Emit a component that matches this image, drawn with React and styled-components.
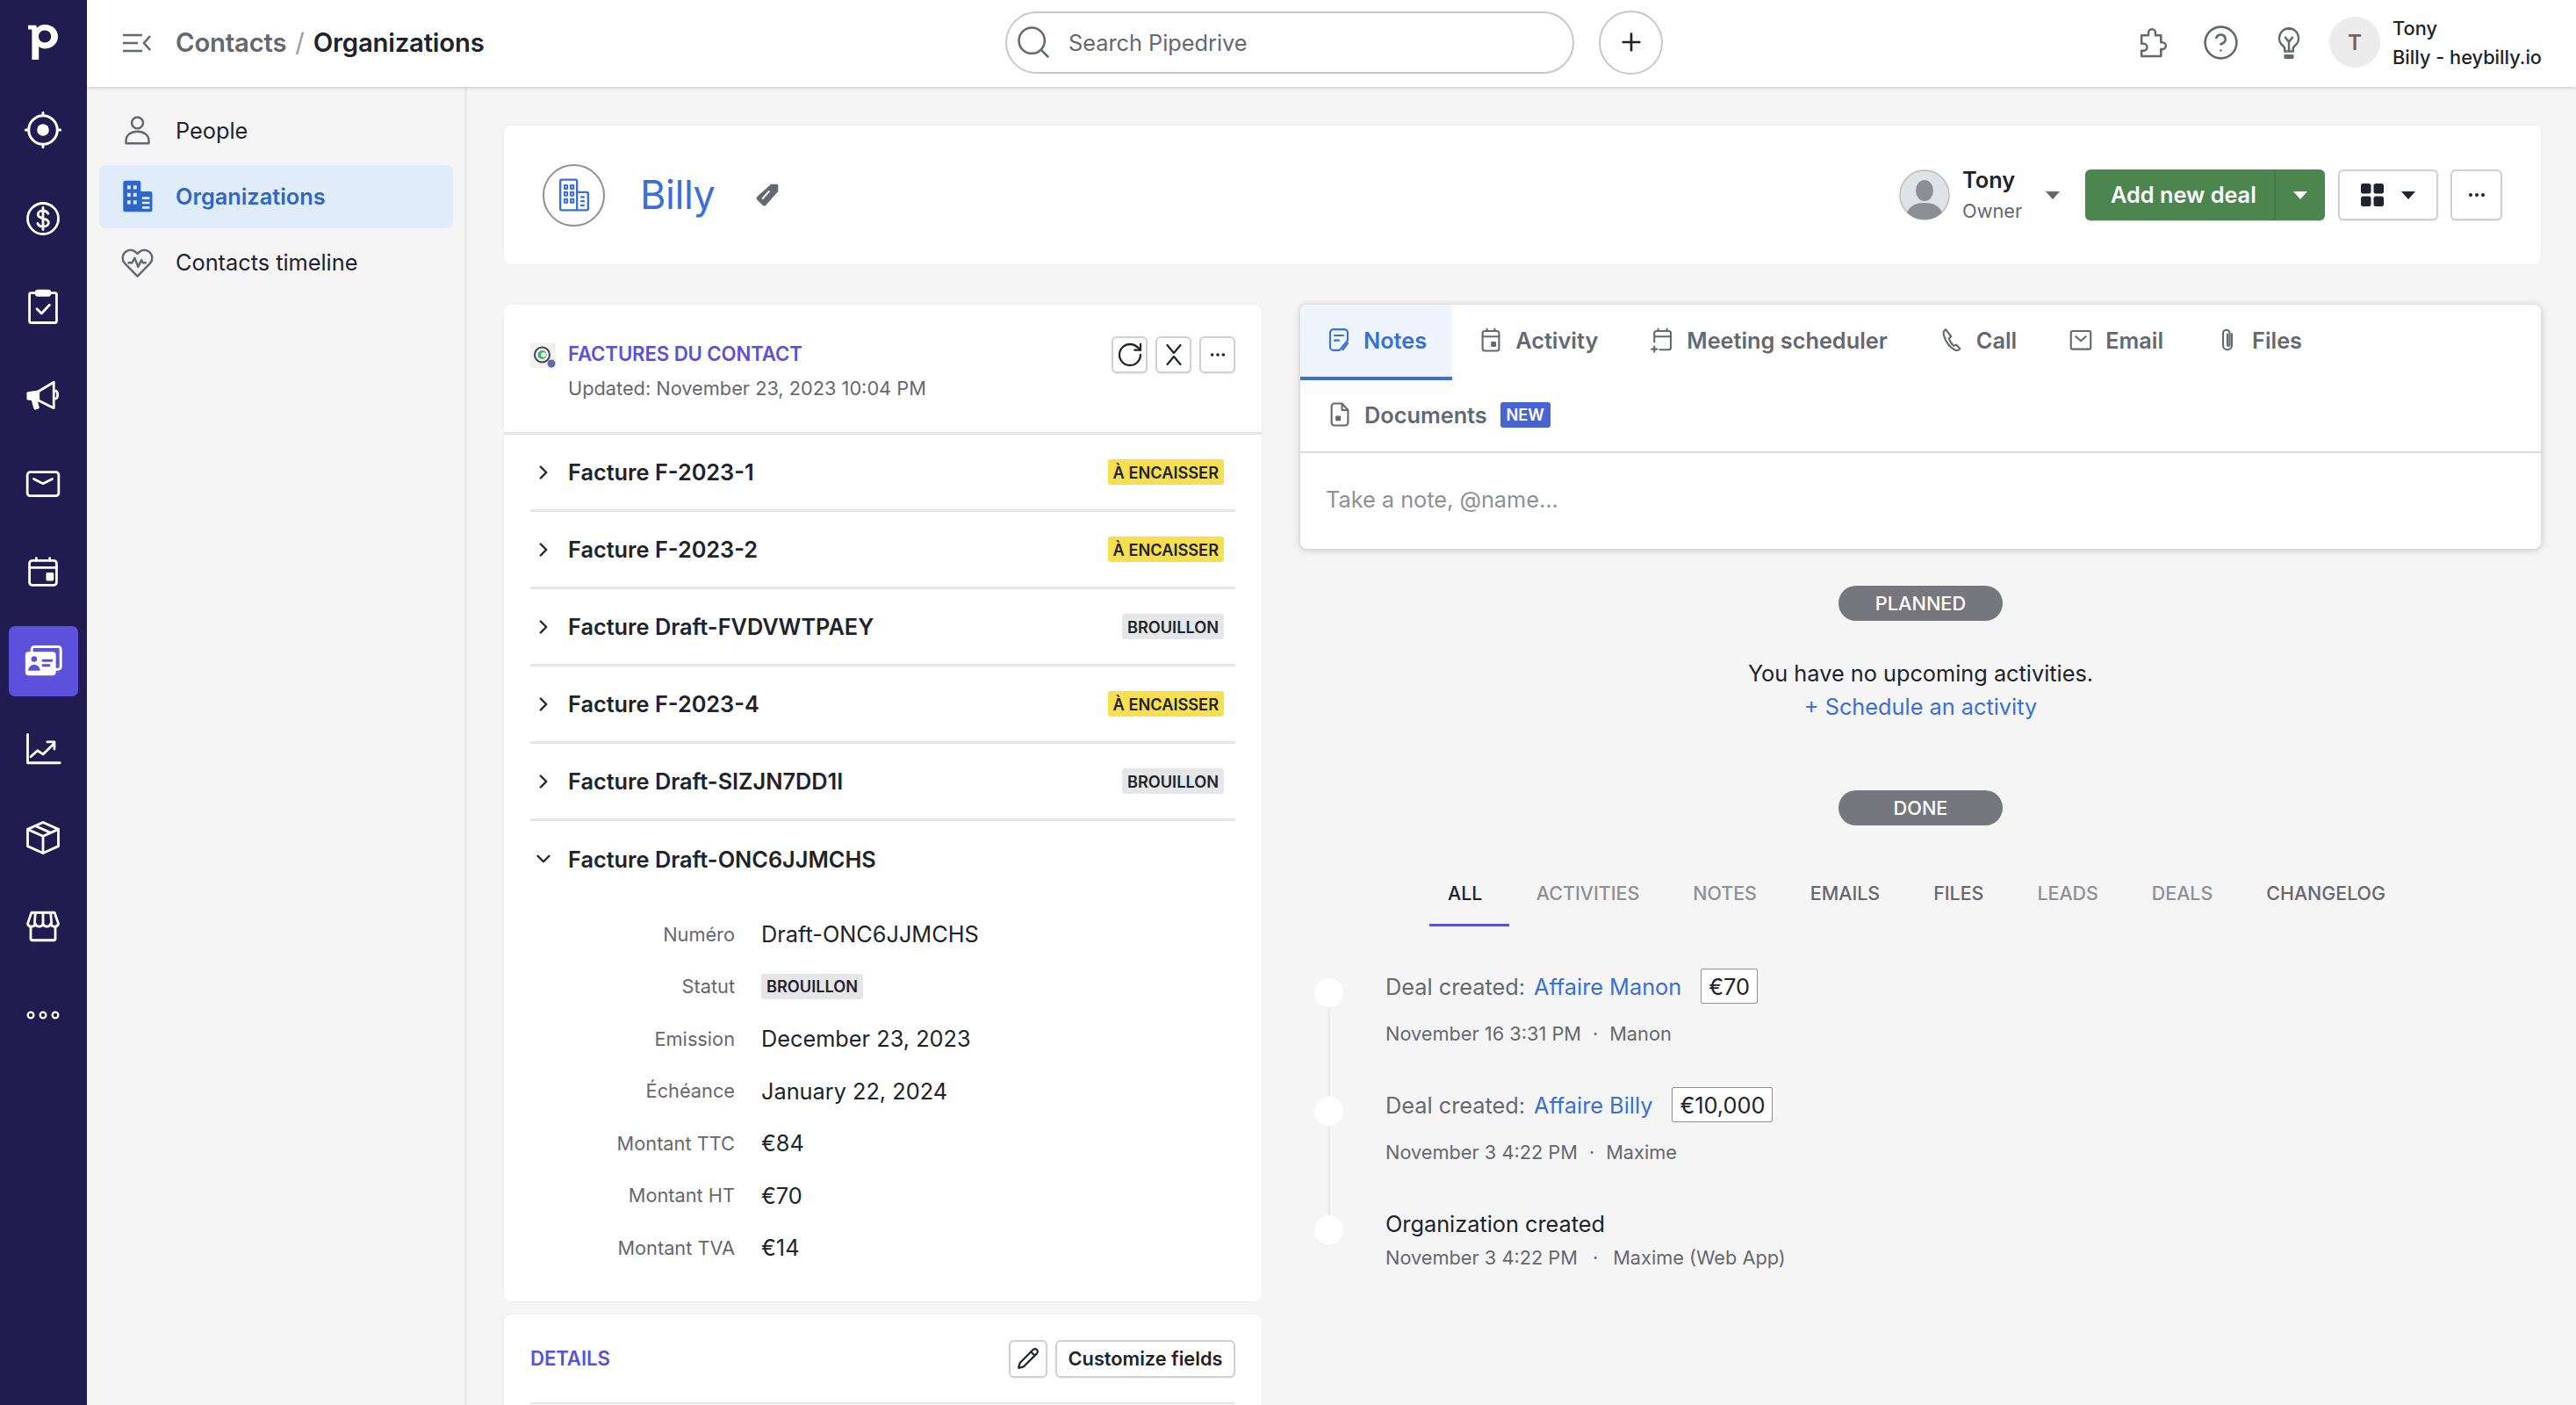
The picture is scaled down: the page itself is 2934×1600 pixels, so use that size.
import React from "react";
import styled, { createGlobalStyle } from "styled-components";
import { Search, Plus, CircleHelp, ChevronRight, ChevronDown, RotateCw, Pencil } from "lucide-react";

const Global = createGlobalStyle`
  html, body { margin: 0; padding: 0; background: #f5f5f5; }
  body { width: 2934px; height: 1600px; overflow: hidden; font-family: Inter, "Liberation Sans", sans-serif; color: #21232c; }
  * { box-sizing: border-box; }
`;

const Page = styled.div`display: flex; width: 2934px; height: 1600px; overflow: hidden;`;
const Nav = styled.nav`width: 99px; flex: none; background: #201c50; display: flex; flex-direction: column; align-items: center;`;
const LogoSlot = styled.div`height: 99px; width: 100%; display: flex; justify-content: center; align-items: center; padding: 0 1px 3px 0; margin-bottom: 9px;`;
const NavList = styled.div`display: flex; flex-direction: column; gap: 20.75px; align-items: center; padding-right: 1px;`;
const NavItem = styled.div`
  width: 79px; height: 80px; border-radius: 7px; display: flex; align-items: center; justify-content: center;
  background: ${p => (p.$active ? "#5d50da" : "transparent")};
`;
const NavSvg = styled.svg.attrs({ viewBox: "0 0 24 24", fill: "none", stroke: "#fff", strokeWidth: 1.6, strokeLinecap: "round", strokeLinejoin: "round" })`
  width: ${p => p.$size || 42}px; height: ${p => p.$size || 42}px;
`;
const Column = styled.div`flex: 1; display: flex; flex-direction: column; min-width: 0;`;
const TopBar = styled.header`
  height: 99px; flex: none; background: #fff; display: flex; align-items: center; padding-right: 39px;
  box-shadow: 0 1px 4px rgba(0,0,0,.18); position: relative; z-index: 2;
`;
const Crumbs = styled.div`width: 1046px; flex: none; display: flex; align-items: center; padding-left: 41px; gap: 28px; margin-top: -2px;`;
const CrumbText = styled.div`display: flex; align-items: center; gap: 10px; font-size: 29.3px; font-weight: 600; letter-spacing: -.2px;`;
const CrumbMuted = styled.span`color: #65686f;`;
const CrumbSlash = styled.span`color: #9a9ca1; font-weight: 400;`;
const SearchBox = styled.div`
  width: 648px; height: 71px; border: 2px solid #c6c8cb; border-radius: 36px; display: flex; align-items: center; gap: 18px;
  padding-left: 8px; margin-top: -3px; color: #65686f; font-size: 25.3px;
`;
const RoundBtn = styled.div`
  width: 73px; height: 73px; border-radius: 50%; border: 2px solid #c6c8cb; margin-left: 28px; margin-top: -3px;
  display: flex; align-items: center; justify-content: center; color: #21232c;
`;
const TopRight = styled.div`margin-left: auto; display: flex; align-items: center;`;
const TopIcon = styled.div`width: 78px; display: flex; justify-content: center; color: #65686f; margin-top: -2px;`;
const TopSvg = styled.svg.attrs({ viewBox: "0 0 24 24", fill: "none", stroke: "currentColor", strokeWidth: 1.6, strokeLinecap: "round", strokeLinejoin: "round" })`
  width: 38px; height: 38px;
`;
const UserAvatar = styled.div`
  width: 58px; height: 58px; border-radius: 50%; background: #ececed; margin-left: 7px; margin-right: 14px; margin-top: -3px;
  display: flex; align-items: center; justify-content: center; color: #65686f; font-size: 24.3px; font-weight: 600;
`;
const UserText = styled.div`display: flex; flex-direction: column; gap: 5px; font-size: 21.75px; font-weight: 500; line-height: 28px; margin-top: -3px;`;
const Body = styled.div`flex: 1; display: flex; min-height: 0;`;
const Side = styled.aside`width: 433px; flex: none; border-right: 3px solid #e9e9e9; padding: 14px 13px 0 14px; display: flex; flex-direction: column; gap: 3px;`;
const SideItem = styled.div`
  height: 72px; border-radius: 7px; display: flex; align-items: center; gap: 25px; padding: 0 0 2px 25px; font-size: 25.3px;
  font-weight: ${p => (p.$active ? 600 : 400)}; color: ${p => (p.$active ? "#2f66c9" : "#21232c")}; background: ${p => (p.$active ? "#e1ecfb" : "transparent")};
`;
const SideSvg = styled.svg.attrs({ viewBox: "0 0 24 24", fill: "none", stroke: "#65686f", strokeWidth: 1.6, strokeLinecap: "round", strokeLinejoin: "round" })`
  width: 37px; height: 37px; flex: none;
`;
const Main = styled.main`flex: 1; min-width: 0; padding: 44px 40px 0 42px; display: flex; flex-direction: column; gap: 46px;`;
const Card = styled.section`background: #fff; border-radius: 8px; box-shadow: 0 0 2px rgba(0,0,0,.08);`;
const HeaderCard = styled(Card)`height: 158px; flex: none; display: flex; align-items: center; padding: 0 44px;`;
const OrgCircle = styled.div`width: 71px; height: 71px; border-radius: 50%; border: 2px solid #8f9196; display: flex; align-items: center; justify-content: center;`;
const OrgName = styled.h1`margin: 0 46px 0 40px; font-size: 44.9px; font-weight: 400; color: #3a6fd8; letter-spacing: -.4px;`;
const HeadRight = styled.div`margin-left: auto; display: flex; align-items: center;`;
const OwnerPic = styled.svg.attrs({ viewBox: "0 0 58 58" })`width: 58px; height: 58px;`;
const OwnerText = styled.div`display: flex; flex-direction: column; margin-left: 14px; width: 95px;`;
const OwnerName = styled.span`font-size: 25.3px; font-weight: 600; line-height: 32px;`;
const OwnerRole = styled.span`font-size: 21.75px; color: #65686f; line-height: 32px; margin-top: 3px;`;
const Caret = styled.span`
  width: 0; height: 0; border-left: 8px solid transparent; border-right: 8px solid transparent; border-top: 9px solid ${p => p.$color || "#21232c"};
  flex: none; display: block;
`;
const OwnerCaretSlot = styled.div`width: 45px;`;
const GreenButton = styled.div`
  height: 58px; width: 273px; border-radius: 6px; background: #4a864e; display: flex; align-items: center; color: #fff; font-size: 25.3px; font-weight: 600;
  box-shadow: 0 1px 2px rgba(0,0,0,.2);
`;
const GreenLabel = styled.div`flex: 1; padding: 0 0 2px 29px;`;
const GreenCaret = styled.div`width: 58px; height: 100%; border-left: 2px solid #437a47; display: flex; align-items: center; justify-content: center;`;
const OutlineBtn = styled.div`
  height: 58px; width: ${p => p.$w}px; margin-left: ${p => p.$ml || 0}px; border-radius: 6px; background: #fff; border: 2px solid #cfd0d3;
  box-shadow: 0 1px 2px rgba(0,0,0,.1); display: flex; align-items: center; justify-content: center; gap: ${p => p.$gap || 0}px;
`;
const Columns = styled.div`display: flex; gap: 44px; flex: 1; min-height: 0;`;
const LeftCol = styled.div`width: 863px; flex: none; display: flex; flex-direction: column; gap: 15px;`;
const RightCol = styled.div`flex: 1; min-width: 0; display: flex; flex-direction: column;`;
const InvoiceCard = styled(Card)`height: 1135px; flex: none;`;
const InvoiceHead = styled.div`height: 148px; border-bottom: 3px solid #e6e6e7; padding: 36px 30px 0; display: flex; align-items: flex-start; gap: 14px;`;
const AppIcon = styled.svg.attrs({ viewBox: "0 0 29 29" })`width: 29px; height: 29px; margin-top: 7px; flex: none;`;
const HeadText = styled.div`flex: 1; display: flex; flex-direction: column; gap: 7px; margin-top: 4px;`;
const SectionTitle = styled.div`font-size: 22.2px; font-weight: 600; color: #5c50d8; line-height: 32px; letter-spacing: -.1px;`;
const Updated = styled.div`font-size: 21.75px; color: #65686f; line-height: 32px;`;
const SmallBtns = styled.div`display: flex; gap: 9px;`;
const SmallBtn = styled.div`
  width: 41px; height: 42px; border-radius: 6px; border: 2px solid #cfd0d3; box-shadow: 0 1px 2px rgba(0,0,0,.1); background: #fff;
  display: flex; align-items: center; justify-content: center; color: #21232c;
`;
const Row = styled.div`
  height: 88px; margin: 0 30px; display: flex; align-items: center; gap: 0;
  border-bottom: ${p => (p.$last ? "none" : "3px solid #e6e6e7")}; padding: 0 13px ${p => (p.$last ? 2 : 0)}px 0;
`;
const ChevronSlot = styled.div`width: 43px; flex: none; display: flex; align-items: center; padding-left: 2px; color: #21232c;`;
const RowTitle = styled.div`flex: 1; font-size: 25.3px; font-weight: 600;`;
const Badge = styled.span`
  height: 29px; padding: 0 6px; border-radius: 3px; display: inline-flex; align-items: center; font-size: 18.2px; font-weight: 600; color: #21232c;
  background: ${p => (p.$kind === "draft" ? "#e5e6e7" : "#f7df4f")};
`;
const Detail = styled.div`display: grid; grid-template-columns: 233px 1fr; grid-auto-rows: 59.5px; column-gap: 30px; margin: 11px 30px 0; align-items: center;`;
const DetailLabel = styled.div`text-align: right; font-size: 21.75px; color: #65686f;`;
const DetailValue = styled.div`font-size: 25.3px; color: #21232c; display: flex; align-items: center;`;
const DetailsCard = styled(Card)`padding: 0 30px; min-height: 300px;`;
const DetailsHead = styled.div`height: 102px; border-bottom: 2px solid #e6e6e7; display: flex; align-items: center; justify-content: space-between;`;
const DetailsActions = styled.div`display: flex; gap: 9px;`;
const IconBtn = styled.div`
  width: 44px; height: 43px; border: 2px solid #cfd0d3; border-radius: 6px; display: flex; align-items: center; justify-content: center;
  box-shadow: 0 1px 2px rgba(0,0,0,.08); color: #21232c;
`;
const TextBtn = styled(IconBtn)`width: 205px; font-size: 21.75px; font-weight: 600;`;
const Composer = styled.section`height: 278px; flex: none; background: #fff; border-radius: 8px; box-shadow: 0 1px 8px rgba(0,0,0,.22); overflow: hidden;`;
const TabRow = styled.div`height: 86px; display: flex;`;
const Tab = styled.div`
  display: flex; align-items: center; gap: 13px; padding: 0 29px 2px; height: 86px; font-size: 25.3px; font-weight: 600;
  color: ${p => (p.$active ? "#3a6fd8" : "#65686f")}; background: ${p => (p.$active ? "#eef5fe" : "transparent")};
  border-bottom: 4px solid ${p => (p.$active ? "#3d6fd6" : "transparent")};
`;
const TabSvg = styled.svg.attrs({ viewBox: "0 0 24 24", fill: "none", stroke: "currentColor", strokeWidth: 1.7, strokeLinecap: "round", strokeLinejoin: "round" })`
  width: 30px; height: 30px; flex: none;
`;
const DocRow = styled.div`height: 83px; border-bottom: 2px solid #dcdcde; display: flex; align-items: center; padding: 0 0 3px 30px; gap: 13px; font-size: 25.3px; font-weight: 600; color: #65686f;`;
const NewBadge = styled.span`height: 29px; width: 57px; border-radius: 3px; background: #4a63d2; color: #fff; font-size: 18.2px; font-weight: 600; display: flex; align-items: center; justify-content: center; margin-left: 2px;`;
const NotePlaceholder = styled.div`height: 109px; padding-left: 29px; display: flex; align-items: center; font-size: 25.3px; color: #8e9096; padding-bottom: 5px;`;
const Pill = styled.div`
  align-self: center; width: 187px; height: 40px; border-radius: 20px; background: #75777d; color: #fff; font-size: 21.75px; font-weight: 500;
  display: flex; align-items: center; justify-content: center; margin-top: ${p => p.$mt}px;
`;
const Empty = styled.div`margin-top: 41px; text-align: center; font-size: 25.3px; line-height: 38px;`;
const Link = styled.a`color: #3a6fd8;`;
const HistoryTabs = styled.div`display: flex; margin: 41px 0 0 147px; height: 74px;`;
const HistoryTab = styled.div`
  height: 74px; display: flex; align-items: center; padding: ${p => (p.$first ? "0 31px 0 21px" : "0 30.5px")}; font-size: 21.4px; font-weight: 500;
  color: ${p => p.$color}; border-bottom: 3px solid ${p => (p.$first ? "#5d50da" : "transparent")};
`;
const Timeline = styled.div`margin: 48px 0 0 16px; display: flex; flex-direction: column;`;
const TimeItem = styled.div`
  position: relative; display: flex; gap: 48px; height: 135px;
  &:not(:last-child)::before { content: ""; position: absolute; left: 15px; top: 26px; height: 135px; width: 3px; background: #ededee; }
`;
const Dot = styled.div`width: 33px; height: 33px; border-radius: 50%; background: #fff; flex: none; margin-top: 11px; position: relative; z-index: 1;`;
const TimeBody = styled.div`display: flex; flex-direction: column;`;
const TimeTitle = styled.div`display: flex; align-items: center; gap: 10px; height: 40px; font-size: 25.3px; color: ${p => (p.$dark ? "#21232c" : "#65686f")};`;
const Amount = styled.span`height: 40px; padding: 0 8px; border: 1.5px solid #8d8f94; background: #fff; color: #21232c; display: flex; align-items: center; margin-left: 12px; border-radius: 2px;`;
const TimeMeta = styled.div`display: flex; gap: ${p => p.$gap || 13}px; font-size: 21.75px; color: #65686f; margin-top: ${p => p.$mt}px; line-height: 38px;`;

const NavIcons = [
  <NavSvg key="t" style={{ strokeWidth: 1.7 }}><circle cx="12" cy="12" r="9.3" /><circle cx="12" cy="12" r="3.9" fill="#fff" stroke="none" /><path d="M12 .8v1.6M12 21.6v1.6M.8 12h1.6M21.6 12h1.6" /></NavSvg>,
  <NavSvg key="d"><circle cx="12" cy="12" r="10" /><path d="M15.3 8.7c-.6-1.2-1.8-1.9-3.3-1.9-1.9 0-3.3 1-3.3 2.5 0 3.6 6.9 1.7 6.9 5.3 0 1.6-1.5 2.6-3.6 2.6-1.6 0-2.9-.7-3.5-2.1M12 4.8v14.4" /></NavSvg>,
  <NavSvg key="c"><rect x="3.2" y="2.6" width="17.6" height="19.4" rx="1" /><rect x="7.6" y="1.2" width="8.8" height="3" rx="1" fill="#fff" /><path d="M8 13l3 3 5.2-5.6" /></NavSvg>,
  <NavSvg key="m"><path d="M2.2 10.6L9 9.6v5.8l-6.8-1z" fill="#fff" /><path d="M9 9.6L19 3.6v16.8L9 15.4" /><path d="M5.2 15l1.6 5.6 2-.5-1.3-4.9" fill="#fff" /><path d="M20.3 9.2c1.6.5 1.6 4.6 0 5.1" /></NavSvg>,
  <NavSvg key="e"><rect x="1.8" y="4.4" width="20.4" height="15.4" rx="1.8" /><path d="M6 8.8l6 3 6-3" /></NavSvg>,
  <NavSvg key="cal"><rect x="3.2" y="4.2" width="17.6" height="16" rx="1.8" /><path d="M3.2 8.8h17.6M7.6 2.6v1.6M16.4 2.6v1.6" /><rect x="14" y="12" width="5" height="5.4" rx=".8" fill="#fff" stroke="none" /></NavSvg>,
  <NavSvg key="card" $size={44}><rect x="5" y="3" width="18" height="14" rx="1.6" /><rect x="1" y="6.2" width="19" height="14.6" rx="2" fill="#fff" stroke="none" /><circle cx="6.5" cy="10.6" r="1.8" fill="#5d50da" stroke="none" /><path d="M2.8 17.8c.2-2.2 1.8-3.6 3.7-3.6s3.5 1.4 3.7 3.6z" fill="#5d50da" stroke="none" /><path d="M12 11.6h5.4M12 14.6h3.8" stroke="#5d50da" /></NavSvg>,
  <NavSvg key="g"><path d="M2 2.5V21h21" /><path d="M4 17l4.4-4 3.6 2.4 7-6.8M14.8 7.4h4.6V12" /></NavSvg>,
  <NavSvg key="b"><path d="M12 2l10 4.5v11L12 22 2 17.5v-11z" /><path d="M2 6.5L12 11l10-4.5M12 11v11M7 4.3l10 4.5" /></NavSvg>,
  <NavSvg key="s"><path d="M4.5 3h15l2.5 7.2c-.3 1.3-1.4 1.9-2.5 1.9s-2.2-.7-2.5-1.9c-.3 1.2-1.5 1.9-2.5 1.9s-2.2-.7-2.5-1.9c-.3 1.2-1.5 1.9-2.5 1.9s-2.2-.7-2.5-1.9c-.3 1.2-1.4 1.9-2.5 1.9S2.3 11.5 2 10.2zM7 3l-.5 7.2M12 3v7.2M17 3l.5 7.2" /><path d="M4 12.2V20a1 1 0 0 0 1 1h14a1 1 0 0 0 1-1v-7.8" /></NavSvg>,
  <NavSvg key="o" style={{ strokeWidth: 1.3 }}><circle cx="4" cy="12" r="1.9" /><circle cx="12" cy="12" r="1.9" /><circle cx="20" cy="12" r="1.9" /></NavSvg>,
];

const invoices = [
  ["Facture F-2023-1", "À ENCAISSER", "due"],
  ["Facture F-2023-2", "À ENCAISSER", "due"],
  ["Facture Draft-FVDVWTPAEY", "BROUILLON", "draft"],
  ["Facture F-2023-4", "À ENCAISSER", "due"],
  ["Facture Draft-SIZJN7DD1I", "BROUILLON", "draft"],
];

const details = [
  ["Numéro", "Draft-ONC6JJMCHS"],
  ["Statut", null],
  ["Emission", "December 23, 2023"],
  ["Échéance", "January 22, 2024"],
  ["Montant TTC", "€84"],
  ["Montant HT", "€70"],
  ["Montant TVA", "€14"],
];

const historyTabs = [
  ["ALL", "#21232c"], ["ACTIVITIES", "#8e9096"], ["NOTES", "#8e9096"], ["EMAILS", "#65686f"],
  ["FILES", "#65686f"], ["LEADS", "#8e9096"], ["DEALS", "#8e9096"], ["CHANGELOG", "#65686f"],
];

const Dots = ({ size = 22 }) => (
  <svg width={size} height={size} viewBox="0 0 22 22" fill="#21232c"><circle cx="4" cy="11" r="2" /><circle cx="11" cy="11" r="2" /><circle cx="18" cy="11" r="2" /></svg>
);

export default function App() {
  return (
    <Page>
      <Global />
      <Nav>
        <LogoSlot>
          <svg width="34" height="40" viewBox="0 0 34 40" fill="#fff">
            <path fillRule="evenodd" d="M0 .8h9.2l1 3C12 1.4 15.2 0 18.8 0 27.4 0 34 5.8 34 13.6S27.6 27.4 19.4 27.4c-3 0-5.4-.8-7.2-2.4V40H4.4V6.8C4.4 6 4 5.6 3.2 5.6H0zM19 6.6c-4.2 0-7 3-7 7s2.8 7 7 7 7.2-3 7.2-7-3-7-7.2-7z" />
          </svg>
        </LogoSlot>
        <NavList>
          {NavIcons.map((icon, i) => <NavItem key={i} $active={i === 6}>{icon}</NavItem>)}
        </NavList>
      </Nav>
      <Column>
        <TopBar>
          <Crumbs>
            <svg width="32" height="22" viewBox="0 0 32 22" fill="none" stroke="#65686f" strokeWidth="2.6">
              <path d="M0 2h22M0 11h17M0 20h22M31 3l-7 8 7 8" />
            </svg>
            <CrumbText><CrumbMuted>Contacts</CrumbMuted><CrumbSlash>/</CrumbSlash><span>Organizations</span></CrumbText>
          </Crumbs>
          <SearchBox><Search size={44} strokeWidth={1.4} color="#65686f" />Search Pipedrive</SearchBox>
          <RoundBtn><Plus size={32} strokeWidth={2} /></RoundBtn>
          <TopRight>
            <TopIcon>
              <TopSvg><path d="M4.5 6.5h5v-2a2.500 2.500 0 0 1 5 0v2h4v5h1a2.500 2.500 0 0 1 0 5h-1v5H4.500v-4H6a2.500 2.500 0 0 0 0-5H4.500z" /></TopSvg>
            </TopIcon>
            <TopIcon><CircleHelp size={43} strokeWidth={1.45} /></TopIcon>
            <TopIcon>
              <TopSvg><path d="M12 1.500a7 7 0 0 0-4 12.700c.8.700 1 1.300 1 2.300v1.500h6v-1.500c0-1 .2-1.600 1-2.300A7 7 0 0 0 12 1.500zM9.300 21h5.400v1.500H9.300zM9.500 8l2.500 3.200L14.500 8M12 11.200V18" /></TopSvg>
            </TopIcon>
            <UserAvatar>T</UserAvatar>
            <UserText><span>Tony</span><span>Billy - heybilly.io</span></UserText>
          </TopRight>
        </TopBar>
        <Body>
          <Side>
            <SideItem>
              <SideSvg><circle cx="12" cy="6.4" r="4.2" /><path d="M3.600 21.600v-2.200c0-4 3.800-6.600 8.400-6.600s8.400 2.600 8.400 6.600v2.200z" /></SideSvg>
              People
            </SideItem>
            <SideItem $active>
              <SideSvg style={{ stroke: "none" }}>
                <path d="M1.500 2A1.500 1.500 0 0 1 3 .5h10A1.500 1.500 0 0 1 14.500 2v6.500h7A1.500 1.500 0 0 1 23 10v12a1.500 1.500 0 0 1-1.500 1.500H3A1.500 1.500 0 0 1 1.500 22z" fill="#2f66c9" />
                <path d="M4.500 4h2.500v2.800H4.500zM9 4h2.500v2.800H9zM4.500 9.500h2.500v2.800H4.500zM9 9.500h2.500v2.800H9zM4.500 15h2.500v2.800H4.500zM9 15h2.500v2.800H9zM15.500 12.500h5.500v1.700h-5.500zM15.500 16h5.500v1.700h-5.500zM15.500 19.500h5.500v1.700h-5.500z" fill="#e1ecfb" />
              </SideSvg>
              Organizations
            </SideItem>
            <SideItem>
              <SideSvg><path d="M12 22.500L2.800 13a5.800 5.800 0 0 1 0-8.200 5.800 5.800 0 0 1 8.200 0l1 1 1-1a5.800 5.800 0 0 1 8.200 0 5.800 5.800 0 0 1 0 8.200z" /><path d="M5.500 12.500H8l2-3.500 2.500 6.500 2.500-5 1 2H18" /></SideSvg>
              Contacts timeline
            </SideItem>
          </Side>
          <Main>
            <HeaderCard>
              <OrgCircle>
                <svg width="38" height="38" viewBox="0 0 24 24" fill="none" stroke="#3a6fd8" strokeWidth="1.5" strokeLinejoin="round">
                  <path d="M2 2a1 1 0 0 1 1-1h10a1 1 0 0 1 1 1v21H3a1 1 0 0 1-1-1zM14 10h7a1 1 0 0 1 1 1v11a1 1 0 0 1-1 1h-7" />
                  <path d="M5 5h2v2.500H5zM9.500 5h2v2.500h-2zM5 10h2v2.500H5zM9.500 10h2v2.500h-2zM5 15h2v2.500H5zM9.500 15h2v2.500h-2zM16.500 13.500h3M16.500 16.500h3M16.500 19.500h3" strokeWidth="1.3" />
                </svg>
              </OrgCircle>
              <OrgName>Billy</OrgName>
              <svg width="28" height="28" viewBox="0 0 24 24">
                <path d="M15.500 1.500h6a1 1 0 0 1 1 1v6L10.500 22a2 2 0 0 1-2.800.2L2 16.800a2 2 0 0 1-.2-2.800z" fill="#65686f" />
                <path d="M14 8l-7 8" stroke="#fff" strokeWidth="1.8" />
              </svg>
              <HeadRight>
                <OwnerPic>
                  <circle cx="29" cy="29" r="28" fill="#dfe2e6" stroke="#b9bdc2" strokeWidth="1.5" />
                  <ellipse cx="29" cy="24" rx="10" ry="12" fill="#8c9095" />
                  <path d="M9 49c3-8 11-11 20-11s17 3 20 11c-5 5-12 8-20 8S14 54 9 49z" fill="#8c9095" />
                </OwnerPic>
                <OwnerText><OwnerName>Tony</OwnerName><OwnerRole>Owner</OwnerRole></OwnerText>
                <OwnerCaretSlot><Caret $color="#65686f" /></OwnerCaretSlot>
                <GreenButton>
                  <GreenLabel>Add new deal</GreenLabel>
                  <GreenCaret><Caret $color="#fff" /></GreenCaret>
                </GreenButton>
                <OutlineBtn $w={114} $ml={15} $gap={20}>
                  <svg width="26" height="26" viewBox="0 0 26 26" fill="#21232c"><rect x="0" y="0" width="11.5" height="11.5" rx="2.5" /><rect x="14.5" y="0" width="11.5" height="11.5" rx="2.5" /><rect x="0" y="14.5" width="11.5" height="11.5" rx="2.5" /><rect x="14.5" y="14.5" width="11.5" height="11.5" rx="2.5" /></svg>
                  <Caret />
                </OutlineBtn>
                <OutlineBtn $w={59} $ml={14}><Dots /></OutlineBtn>
              </HeadRight>
            </HeaderCard>
            <Columns>
              <LeftCol>
                <InvoiceCard>
                  <InvoiceHead>
                    <AppIcon>
                      <rect width="29" height="29" rx="2" fill="#f4f2ee" />
                      <circle cx="13.5" cy="14" r="8.5" fill="none" stroke="#3f4456" strokeWidth="2" />
                      <circle cx="13.5" cy="14" r="5" fill="#39b56a" />
                      <circle cx="15" cy="14" r="2.8" fill="#f4f2ee" />
                      <circle cx="24" cy="24" r="4.5" fill="#5b6fb0" />
                    </AppIcon>
                    <HeadText>
                      <SectionTitle>FACTURES DU CONTACT</SectionTitle>
                      <Updated>Updated: November 23, 2023 10:04 PM</Updated>
                    </HeadText>
                    <SmallBtns>
                      <SmallBtn><RotateCw size={32} strokeWidth={1.7} /></SmallBtn>
                      <SmallBtn>
                        <svg width="22" height="26" viewBox="0 0 22 26" fill="none" stroke="#21232c" strokeWidth="2.2" strokeLinecap="round" strokeLinejoin="round"><path d="M3.500 2l7.500 9 7.500-9M3.500 24l7.500-9 7.500 9" /></svg>
                      </SmallBtn>
                      <SmallBtn><Dots size={20} /></SmallBtn>
                    </SmallBtns>
                  </InvoiceHead>
                  {invoices.map(([title, status, kind]) => (
                    <Row key={title}>
                      <ChevronSlot><ChevronRight size={26} strokeWidth={2.2} /></ChevronSlot>
                      <RowTitle>{title}</RowTitle>
                      <Badge $kind={kind}>{status}</Badge>
                    </Row>
                  ))}
                  <Row $last>
                    <ChevronSlot><ChevronDown size={26} strokeWidth={2.2} /></ChevronSlot>
                    <RowTitle>Facture Draft-ONC6JJMCHS</RowTitle>
                  </Row>
                  <Detail>
                    {details.map(([label, value]) => (
                      <React.Fragment key={label}>
                        <DetailLabel>{label}</DetailLabel>
                        <DetailValue>{value || <Badge $kind="draft">BROUILLON</Badge>}</DetailValue>
                      </React.Fragment>
                    ))}
                  </Detail>
                </InvoiceCard>
                <DetailsCard>
                  <DetailsHead>
                    <SectionTitle>DETAILS</SectionTitle>
                    <DetailsActions>
                      <IconBtn><Pencil size={26} strokeWidth={2} /></IconBtn>
                      <TextBtn>Customize fields</TextBtn>
                    </DetailsActions>
                  </DetailsHead>
                </DetailsCard>
              </LeftCol>
              <RightCol>
                <Composer>
                  <TabRow>
                    <Tab $active>
                      <TabSvg><path d="M7 2.500h10a3 3 0 0 1 3 3v7l-7.500 9H7a3 3 0 0 1-3-3v-13a3 3 0 0 1 3-3z" /><path d="M8 8h8M8 12.500h4M20 15l-4.500 6" /></TabSvg>
                      Notes
                    </Tab>
                    <Tab>
                      <TabSvg><rect x="4.500" y="4" width="15" height="18" rx="2" /><path d="M4.500 9h15M8.500 2v2M15.500 2v2" /><rect x="13" y="14.500" width="3" height="3" fill="currentColor" /></TabSvg>
                      Activity
                    </Tab>
                    <Tab>
                      <TabSvg><path d="M5 14V6a2 2 0 0 1 2-2h11a2 2 0 0 1 2 2v13a2 2 0 0 1-2 2h-8M5 9h15M8.500 2v2M16.500 2v2M5 18v5M2.500 20.500h5" /></TabSvg>
                      Meeting scheduler
                    </Tab>
                    <Tab>
                      <TabSvg><path d="M6.500 2.500C4.500 3.500 4 5.500 5 8.500c1.500 5 5 10 9.500 12.500 2 1 4 .5 5-1l-3.500-3.500-2 1c-2-1.500-4-5-4.500-7l2-1.500z" /></TabSvg>
                      Call
                    </Tab>
                    <Tab>
                      <TabSvg><rect x="3" y="4" width="18" height="16.500" rx="1.500" /><path d="M7.500 9l4.500 4 4.500-4" /></TabSvg>
                      Email
                    </Tab>
                    <Tab>
                      <TabSvg><path d="M16 6.500V17a4 4 0 0 1-8 0V6a3 3 0 0 1 6 0v10.500a1 1 0 0 1-2 0V7" /></TabSvg>
                      Files
                    </Tab>
                  </TabRow>
                  <DocRow>
                    <TabSvg><path d="M14 2H7a2.500 2.500 0 0 0-2.500 2.500v15A2.500 2.500 0 0 0 7 22h10a2.500 2.500 0 0 0 2.500-2.500V8zM14 2v6h5.500" /><rect x="9" y="14" width="3" height="3" fill="currentColor" /></TabSvg>
                    Documents
                    <NewBadge>NEW</NewBadge>
                  </DocRow>
                  <NotePlaceholder>Take a note, @name...</NotePlaceholder>
                </Composer>
                <Pill $mt={42}>PLANNED</Pill>
                <Empty>You have no upcoming activities.<br /><Link>+ Schedule an activity</Link></Empty>
                <Pill $mt={76}>DONE</Pill>
                <HistoryTabs>
                  {historyTabs.map(([label, color], i) => <HistoryTab key={label} $first={i === 0} $color={color}>{label}</HistoryTab>)}
                </HistoryTabs>
                <Timeline>
                  <TimeItem>
                    <Dot />
                    <TimeBody>
                      <TimeTitle>Deal created: <Link>Affaire Manon</Link><Amount>€70</Amount></TimeTitle>
                      <TimeMeta $mt={15}><span>November 16 3:31 PM</span><span>·</span><span>Manon</span></TimeMeta>
                    </TimeBody>
                  </TimeItem>
                  <TimeItem>
                    <Dot />
                    <TimeBody>
                      <TimeTitle>Deal created: <Link>Affaire Billy</Link><Amount>€10,000</Amount></TimeTitle>
                      <TimeMeta $mt={15}><span>November 3 4:22 PM</span><span>·</span><span>Maxime</span></TimeMeta>
                    </TimeBody>
                  </TimeItem>
                  <TimeItem>
                    <Dot />
                    <TimeBody>
                      <TimeTitle $dark>Organization created</TimeTitle>
                      <TimeMeta $mt={0} $gap={17}><span>November 3 4:22 PM</span><span>·</span><span>Maxime (Web App)</span></TimeMeta>
                    </TimeBody>
                  </TimeItem>
                </Timeline>
              </RightCol>
            </Columns>
          </Main>
        </Body>
      </Column>
    </Page>
  );
}
